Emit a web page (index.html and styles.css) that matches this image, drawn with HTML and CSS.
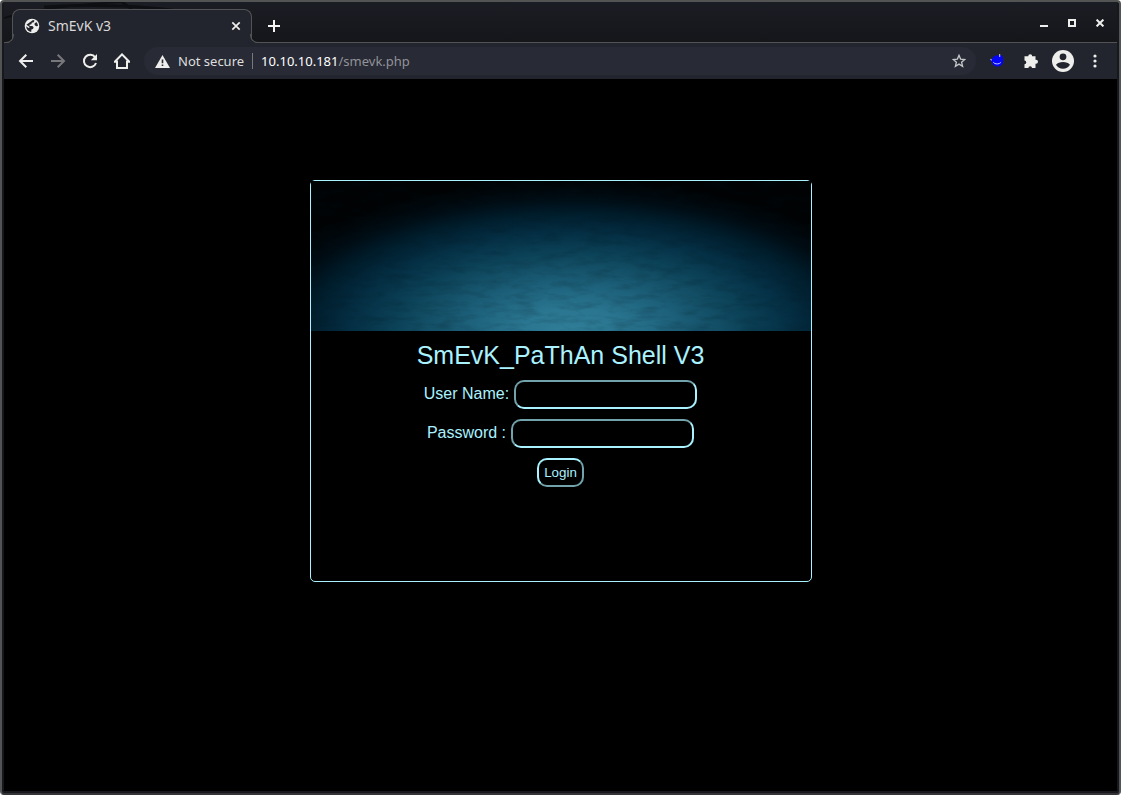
FILE: index.html
```html
<!DOCTYPE html>
<html lang="en">
<head>
<meta charset="utf-8">
<title>SmEvK v3</title>
<link rel="stylesheet" href="styles.css">
</head>
<body>
<div class="window">
  <header class="tabstrip">
    <svg class="swirl" width="220" height="40" viewBox="0 0 220 40" fill="none" stroke="#0e0f12" aria-hidden="true">
      <path d="M0 16Q40 4 118 0" stroke-width="2"/>
      <path d="M40 5Q130 0 190 12M118 0L128 7" stroke-width="3"/>
    </svg>
    <div class="tab">
      <svg width="16" height="16" viewBox="0 0 16 16" aria-hidden="true">
        <circle cx="8" cy="8" r="7.3" fill="#eeeeec"/>
        <path d="M9 2.100L10.500 2.500 9.800 4.300 7.800 4.800 7.400 6.300 5.500 6.800 5.600 8 8.400 8 9.600 9.300 9 11 7.400 11.500 7.200 13.900C4 13.400 2.100 11 2.200 8.300L4.500 10 5.500 9.800 5.200 8.600 3.500 7.600 2.400 6.800ZM12.300 4C13.400 5.100 14 6.500 13.900 8L12.200 8.200 10.800 7.200 10.400 5.800Z" fill="#23252e"/>
      </svg>
      <span class="tab-title">SmEvK v3</span>
      <button class="tab-close" aria-label="Close tab"><svg width="10" height="10" viewBox="0 0 10 10"><path d="M1.300 1.300L8.700 8.700M8.700 1.300L1.300 8.700" stroke="#eeeeec" stroke-width="1.700"/></svg></button>
    </div>
    <button class="new-tab" aria-label="New tab"><svg width="14" height="14" viewBox="0 0 14 14"><path d="M7 1V13M1 7H13" stroke="#f4f4f2" stroke-width="2"/></svg></button>
    <div class="window-controls">
      <button aria-label="Minimize"><svg width="8" height="8" viewBox="0 0 8 8"><path d="M0 7H8" stroke="#eeeeec" stroke-width="2"/></svg></button>
      <button aria-label="Maximize"><svg width="8" height="8" viewBox="0 0 8 8"><path d="M1 1H7V7H1Z" fill="none" stroke="#eeeeec" stroke-width="2"/></svg></button>
      <button aria-label="Close"><svg width="8" height="8" viewBox="0 0 8 8"><path d="M.6.6L7.400 7.400M7.400.6L.6 7.400" stroke="#eeeeec" stroke-width="2"/></svg></button>
    </div>
  </header>
  <nav class="toolbar">
    <button aria-label="Back"><svg width="16" height="16" viewBox="0 0 16 16" fill="none" stroke="#eeeeec" stroke-width="2"><path d="M15 8H2.500M8.300 1.700L2 8L8.300 14.300"/></svg></button>
    <button aria-label="Forward"><svg width="16" height="16" viewBox="0 0 16 16" fill="none" stroke="#77787b" stroke-width="2"><path d="M1 8H13.500M7.700 1.700L14 8L7.700 14.300"/></svg></button>
    <button aria-label="Reload"><svg width="16" height="16" viewBox="0 0 16 16"><path d="M13.200 4.300A6.200 6.200 0 1 0 14 10" fill="none" stroke="#eeeeec" stroke-width="2"/><path d="M15 1V7.200H8.800Z" fill="#eeeeec"/></svg></button>
    <button aria-label="Home"><svg width="16" height="16" viewBox="0 0 16 16"><path d="M.8 8.700L8 1.400L15.200 8.700H13V15H3V8.700Z" fill="none" stroke="#eeeeec" stroke-width="2"/></svg></button>
    <div class="address">
      <svg width="15" height="13" viewBox="0 0 15 13" aria-hidden="true"><path d="M7.500 0L15 13H0Z" fill="#eeeeec"/><path d="M7.500 4.500V8.300M7.500 9.500V11" stroke="#282a35" stroke-width="1.600"/></svg>
      <span class="security">Not secure</span>
      <span class="url"><b>10.10.10.181</b>/smevk.php</span>
      <button class="bookmark" aria-label="Bookmark"><svg width="14" height="14" viewBox="0 0 14 14"><path d="M7 1.300L8.600 5.100L12.700 5.500L9.600 8.200L10.600 12.300L7 10.100L3.400 12.300L4.400 8.200L1.300 5.500L5.400 5.100Z" fill="none" stroke="#c6c7c9" stroke-width="1.300"/></svg></button>
    </div>
    <div class="actions">
      <button aria-label="Extension"><svg width="14" height="14" viewBox="0 0 14 14"><path d="M0 5.200L2 5.300 3.500 2.500 7 1.300 9 1.500 10 .8 12.500 2 13.300 6 12.800 9.500 10 12.300 6 12.500 3 10.800 1.500 7.500Z" fill="#0404f6"/><path d="M.3 5.300L2 6.200M9.700 0V3M3.300 8.300L4.500 9.300C6.500 10.300 9 10.200 10.800 8.500" fill="none" stroke="#dce2ff" stroke-width=".9"/></svg></button>
      <button aria-label="Extensions"><svg width="16" height="16" viewBox="0 0 16 16"><path d="M1.500 3.300H5.200A2 2 0 1 1 9.200 3.300H12.500V6.800H13A2 2 0 1 1 13 10.800H12.500V15H9A1.700 1.700 0 0 0 5.400 15H1.500V11.200A1.800 1.800 0 0 0 1.500 7.600Z" fill="#eeeeec"/></svg></button>
      <button aria-label="Profile"><svg width="22" height="22" viewBox="0 0 22 22"><circle cx="11" cy="11" r="11" fill="#eeeeec"/><circle cx="11" cy="6.800" r="3.400" fill="#23252e"/><path d="M4 14.800C5.500 12.800 8 12 11 12S16.500 12.800 18 14.800C16.400 17.300 14 18.700 11 18.700S5.600 17.300 4 14.800Z" fill="#23252e"/></svg></button>
      <button aria-label="Menu"><svg width="4" height="14" viewBox="0 0 4 14" fill="#eeeeec"><circle cx="2" cy="2" r="1.600"/><circle cx="2" cy="7" r="1.600"/><circle cx="2" cy="12" r="1.600"/></svg></button>
    </div>
  </nav>
  <main class="page">
    <section class="card">
      <div class="banner">
        <svg width="100%" height="100%" aria-hidden="true">
          <filter id="grain" x="0" y="0" width="100%" height="100%" color-interpolation-filters="sRGB">
            <feTurbulence type="fractalNoise" baseFrequency="0.04 0.14" numOctaves="4" seed="7"/>
            <feColorMatrix values="0 0 0 0 0  0 0 0 0 0.080  0 0 0 0 0.110  0.450 0 0 0 -0.190"/>
          </filter>
          <rect width="100%" height="100%" filter="url(#grain)"/>
        </svg>
      </div>
      <form class="login" onsubmit="return false">
        <h1>SmEvK_PaThAn Shell V3</h1>
        <div class="row"><label for="user">User Name:</label><input id="user" type="text"></div>
        <div class="row"><label for="pass">Password :</label><input id="pass" type="password"></div>
        <button class="submit" type="submit">Login</button>
      </form>
    </section>
  </main>
</div>
</body>
</html>
```
FILE: styles.css
```css
* { box-sizing: border-box; }

body {
  margin: 0;
  background: #fff;
  font-family: "Noto Sans", sans-serif;
}

button {
  padding: 0;
  border: 0;
  background: none;
  color: inherit;
}

svg { display: block; }

.window {
  display: flex;
  flex-direction: column;
  min-height: 100vh;
  border: 2px solid #515452;
  border-bottom-color: #343437;
  border-radius: 4px;
  background: #17181d;
  padding: 0 2px 2px;
  overflow: hidden;
}

.tabstrip {
  position: relative;
  display: flex;
  align-items: flex-end;
  height: 41px;
  padding-left: 8px;
  background: linear-gradient(#1b1d24, #15161a);
  border-bottom: 1px solid #515355;
}

.swirl {
  position: absolute;
  left: 0;
  top: 0;
}

.tab {
  position: relative;
  display: flex;
  align-items: center;
  gap: 8px;
  width: 240px;
  height: 34px;
  margin-bottom: -1px;
  padding: 0 10px 2px 11px;
  border: 1px solid #515355;
  border-bottom: 0;
  border-radius: 8px 8px 0 0;
  background: #23252e;
}

.tab::before,
.tab::after {
  content: "";
  position: absolute;
  bottom: 0;
  width: 8px;
  height: 8px;
  border-bottom: 1px solid #515355;
}

.tab::before {
  right: 100%;
  border-right: 1px solid #515355;
  border-bottom-right-radius: 8px;
  margin-right: -1px;
  box-shadow: 3px 3px 0 #23252e;
}

.tab::after {
  left: 100%;
  border-left: 1px solid #515355;
  border-bottom-left-radius: 8px;
  margin-left: -1px;
  box-shadow: -3px 3px 0 #23252e;
}

.tab-title {
  flex: 1;
  color: #d8d8d8;
  font-size: 14px;
  line-height: 20px;
}

.new-tab { margin: 0 0 9px 15px; }

.window-controls {
  display: flex;
  gap: 20px;
  margin: 0 13px 15px auto;
}

.toolbar {
  display: flex;
  align-items: center;
  gap: 16px;
  height: 36px;
  padding: 0 20px 0 14px;
  background: #23252e;
}

.address {
  display: flex;
  flex: 1;
  align-items: center;
  height: 28px;
  margin-left: -2px;
  padding: 0 10px 0 11px;
  border-radius: 14px;
  background: #282a35;
  font-size: 13px;
  line-height: 20px;
}

.security {
  margin-left: 8px;
  padding-right: 8px;
  border-right: 1px solid #77797e;
  color: #dededf;
  line-height: 16px;
}

.url {
  flex: 1;
  margin-left: 8px;
  color: #929398;
}

.url b {
  color: #fff;
  font-weight: 400;
}

.actions {
  display: flex;
  align-items: center;
  gap: 19px;
  margin-left: -2px;
}

.actions button:nth-child(3) { margin-left: -6px; }

.page {
  flex: 1;
  padding: 101px 16px;
  background: #000;
  color: #aaf2ff;
  font-family: "Liberation Sans", Arial, sans-serif;
}

.card {
  max-width: 502px;
  min-height: 402px;
  margin: 0 auto;
  border: 1px solid #aaf2ff;
  border-radius: 5px;
}

.banner {
  height: 150px;
  background: radial-gradient(ellipse 340px 152px at 52% 100%,
    #307e98 0%, #2a7590 15%, #206680 27%, #15536b 40%,
    #0b4157 52%, #042e43 65%, #001d2c 77%, #000b12 88%, #000203 100%);
}

.login {
  display: flex;
  flex-direction: column;
  align-items: center;
  gap: 10px;
  padding-top: 10px;
}

.login h1 {
  margin: 0;
  font-size: 25px;
  font-weight: 400;
  line-height: 29px;
}

.row {
  display: flex;
  align-items: center;
  gap: 5px;
  font-size: 16px;
  line-height: 18px;
}

.row label { padding-bottom: 2px; }

.row input {
  width: 183px;
  height: 29px;
  padding: 5px;
  border: 2px inset #aaf2ff;
  border-radius: 10px;
  background: #000;
  color: #aaf2ff;
}

.submit {
  height: 29px;
  padding: 0 5px;
  border: 2px outset #aaf2ff;
  border-radius: 10px;
  background: #000;
  color: #aaf2ff;
  font-family: "Liberation Sans", Arial, sans-serif;
}
```
